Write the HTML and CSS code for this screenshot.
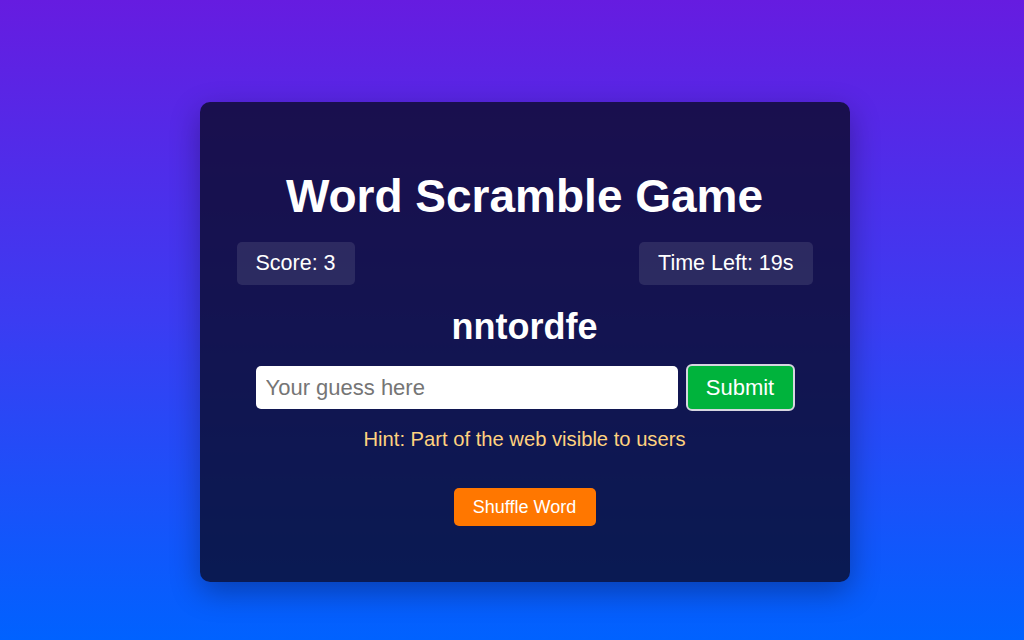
FILE: index.html
```html
<!DOCTYPE html>
<html lang="en">
<head>
<meta charset="utf-8">
<title>Word Scramble Game</title>
<link rel="stylesheet" href="styles.css">
</head>
<body>
  <main class="card">
    <h1 class="title">Word Scramble Game</h1>
    <div class="stats">
      <div class="stat">Score: 3</div>
      <div class="stat">Time Left: 19s</div>
    </div>
    <div class="word">nntordfe</div>
    <form class="guess-row">
      <input class="guess-input" type="text" placeholder="Your guess here">
      <button class="submit-btn" type="button">Submit</button>
    </form>
    <p class="hint">Hint: Part of the web visible to users</p>
    <button class="shuffle-btn" type="button">Shuffle Word</button>
  </main>
</body>
</html>
```

FILE: styles.css
```css
* { box-sizing: border-box; }

html, body {
  margin: 0;
  height: 100%;
}

body {
  font-family: "Liberation Sans", Arial, sans-serif;
  background: linear-gradient(180deg, #661ce0 0%, #3b3cf2 50%, #0062ff 100%);
  display: flex;
  justify-content: center;
  align-items: flex-start;
  padding-top: 102px;
  padding-left: 25px;
  color: #fff;
}

.card {
  width: 650px;
  height: 480px;
  background: rgba(10, 10, 40, 0.8);
  border-radius: 10px;
  box-shadow: 0 10px 30px rgba(0, 0, 0, 0.3);
  padding: 66px 37px 0;
  display: flex;
  flex-direction: column;
  align-items: center;
}

.title {
  margin: 0;
  font-size: 46px;
  font-weight: bold;
  line-height: 56px;
}

.stats {
  align-self: stretch;
  display: flex;
  justify-content: space-between;
  margin-top: 18px;
}

.stat {
  background: rgba(255, 255, 255, 0.1);
  border-radius: 5px;
  font-size: 21.5px;
  line-height: 25px;
  padding: 9px 19px;
}

.word {
  margin-top: 21px;
  font-size: 36px;
  font-weight: bold;
  line-height: 41px;
}

.guess-row {
  display: flex;
  align-items: center;
  gap: 8px;
  margin: 17px 0 0 1px;
}

.guess-input {
  width: 422px;
  height: 43px;
  border: none;
  border-radius: 5px;
  background: #fff;
  padding: 0 10px;
  font-family: "Liberation Sans", Arial, sans-serif;
  font-size: 22px;
  color: #222;
  outline: none;
}

.guess-input::placeholder {
  color: #757575;
}

.submit-btn {
  width: 109px;
  height: 47px;
  border: 2px solid #d6d6e0;
  border-radius: 6px;
  background: #00b33c;
  color: #fff;
  font-family: "Liberation Sans", Arial, sans-serif;
  font-size: 22px;
  padding: 0;
}

.hint {
  margin: 17px 0 0;
  font-size: 20.2px;
  line-height: 23px;
  color: #ffd27f;
}

.shuffle-btn {
  margin-top: 37px;
  width: 142px;
  height: 38px;
  border: none;
  border-radius: 5px;
  background: #ff7700;
  color: #fff;
  font-family: "Liberation Sans", Arial, sans-serif;
  font-size: 18px;
  padding: 0;
}
```
